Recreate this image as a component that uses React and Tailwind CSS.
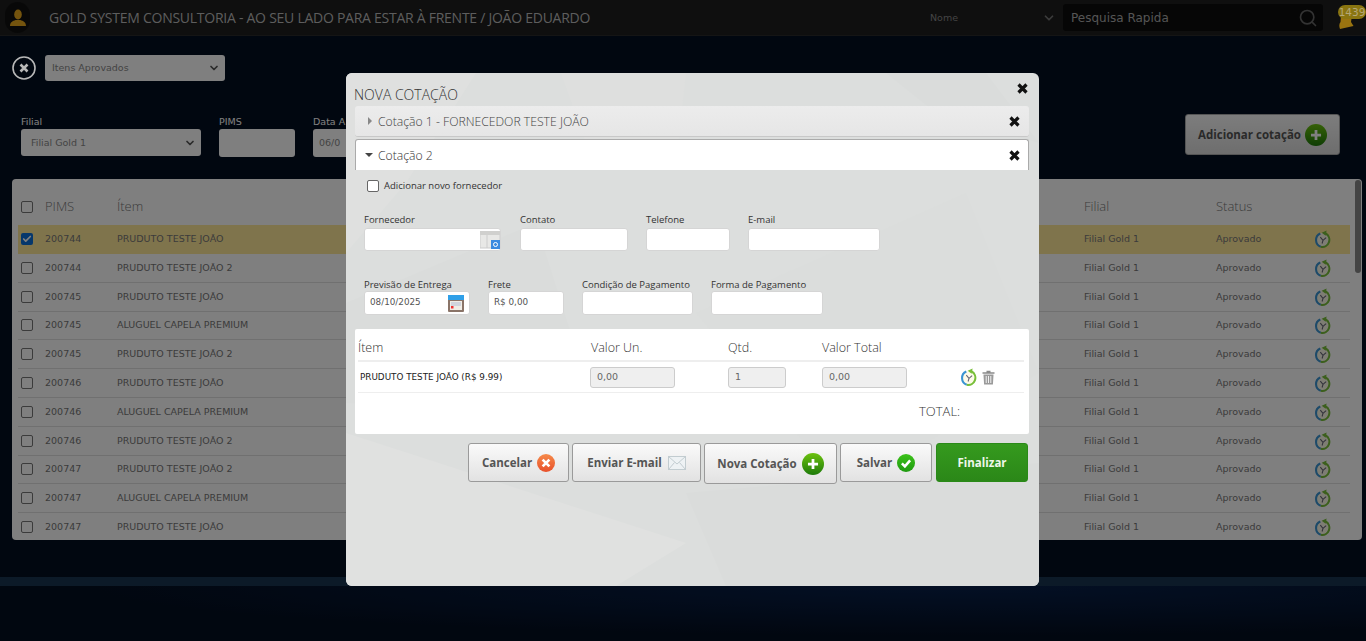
import React from "react";
import { ChevronDown, Search, Check } from "lucide-react";

const OS = "font-['Open_Sans',sans-serif]";
const NS = "font-['DejaVu_Sans',sans-serif]";

const rows = [
  ["200744", "PRUDUTO TESTE JOÃO", true],
  ["200744", "PRUDUTO TESTE JOÃO 2"],
  ["200745", "PRUDUTO TESTE JOÃO"],
  ["200745", "ALUGUEL CAPELA PREMIUM"],
  ["200745", "PRUDUTO TESTE JOÃO 2"],
  ["200746", "PRUDUTO TESTE JOÃO"],
  ["200746", "ALUGUEL CAPELA PREMIUM"],
  ["200746", "PRUDUTO TESTE JOÃO 2"],
  ["200747", "PRUDUTO TESTE JOÃO 2"],
  ["200747", "ALUGUEL CAPELA PREMIUM"],
  ["200747", "PRUDUTO TESTE JOÃO"],
];

function ClockIcon({ size = 18 }) {
  return (
    <svg width={size} height={size} viewBox="0 0 20 20" className="shrink-0">
      <circle cx="10" cy="11" r="8" fill="#fdfbe8" />
      <path d="M7 3.900A8 8 0 0 0 7.500 18.700" fill="none" stroke="#3a94d2" strokeWidth="2.300" />
      <path d="M7.500 18.700A8 8 0 0 0 13 3.900" fill="none" stroke="#78bf3a" strokeWidth="2.300" />
      <path d="M14 .5 8.500 3l4.500 3.500z" fill="#78bf3a" />
      <path d="M10 11.500 7 8M10 11.500l3.500-3M10 11.500l-1 3.500" stroke="#667" strokeWidth="1.200" fill="none" />
    </svg>
  );
}

function TrashIcon() {
  return (
    <svg width="13" height="15" viewBox="0 0 13 15" className="shrink-0 ml-[4px]">
      <path d="M4.500 1.500h4M.5 3h12" stroke="#8a8a8a" strokeWidth="1.500" fill="none" />
      <path d="M1.500 4.500h10l-.6 10H2.100z" fill="#9a9a9a" />
      <path d="M4.200 6v7M6.500 6v7M8.800 6v7" stroke="#f2f2f2" strokeWidth="1" />
    </svg>
  );
}

function RoundIcon({ size, from, to, children }) {
  return (
    <svg width={size} height={size} viewBox="0 0 24 24" className="shrink-0">
      <defs>
        <linearGradient id={`g${from.slice(1)}`} x1="0" y1="0" x2="0" y2="1">
          <stop offset="0" stopColor={from} />
          <stop offset="1" stopColor={to} />
        </linearGradient>
      </defs>
      <circle cx="12" cy="12" r="12" fill={`url(#g${from.slice(1)})`} />
      {children}
    </svg>
  );
}

const PlusIcon = ({ size = 22 }) => (
  <RoundIcon size={size} from="#6cc20e" to="#1d7a0a">
    <path d="M12 6.500v11M6.500 12h11" stroke="#fff" strokeWidth="3" />
  </RoundIcon>
);
const CancelIcon = () => (
  <RoundIcon size={18} from="#f58a4a" to="#e8502a">
    <path d="M7.500 7.500l9 9M16.500 7.500l-9 9" stroke="#fff" strokeWidth="3.600" />
  </RoundIcon>
);
const OkIcon = () => (
  <RoundIcon size={18} from="#3cc21a" to="#1f9a10">
    <path d="M6.500 12.500l4 4 7-8" stroke="#fff" strokeWidth="3.400" fill="none" />
  </RoundIcon>
);

const CloseX = () => (
  <svg width="13" height="13" viewBox="0 0 13 13" className="shrink-0">
    <path d="M2.500 2.500l8 8M10.500 2.500l-8 8" stroke="#111" strokeWidth="3.200" />
  </svg>
);

function Field({ label, w, value, gap, h, children }) {
  return (
    <div className={`flex flex-col ${w}`}>
      <span className={`${OS} text-[9.500px] leading-[12px] text-[#333] whitespace-nowrap ${gap}`}>{label}</span>
      <div className={`relative ${h} bg-white rounded-[3px] border border-[#d5d5d5] flex items-center pl-[5px]`}>
        <span className={`${NS} text-[8.800px] text-[#555]`}>{value}</span>
        {children}
      </div>
    </div>
  );
}

function ModalButton({ w, h = "h-[39px]", children, className = "" }) {
  return (
    <button className={`${w} ${h} ${OS} ${className} rounded-[3px] border border-[#9a9a9a] bg-gradient-to-b from-[#fafafa] to-[#e2e2e2] text-[#555] text-[11.500px] font-bold flex items-center justify-center gap-[5px]`}>
      {children}
    </button>
  );
}

const Texture = () => (
  <svg className="absolute inset-0 w-full h-full" viewBox="0 0 693 513" preserveAspectRatio="none">
    <rect width="693" height="513" fill="#dcdedd" />
    <polygon points="0,0 130,0 60,110 0,180" fill="#dfe0df" />
    <polygon points="215,0 340,0 330,90 240,70" fill="#dedfde" />
    <polygon points="0,230 190,150 250,340 0,330" fill="#dadcdb" />
    <polygon points="350,240 620,120 693,300 500,420" fill="#dbdddc" />
    <polygon points="540,0 640,0 693,70 590,40" fill="#dadcdb" />
    <polygon points="0,360 340,470 270,513 0,513" fill="#e0e1e0" />
    <polygon points="340,420 693,390 693,513 380,513" fill="#dadcdb" />
  </svg>
);

const Disabled = ({ w, children }) => (
  <span className={`${NS} text-[9.500px] text-[#666] ${w} h-[21px] bg-[#efefef] border border-[#ccc] rounded-[3px] flex items-center pl-[6px]`}>{children}</span>
);

function Modal() {
  return (
    <div className="absolute left-[346px] top-[73px] w-[693px] h-[513px] rounded-[6px] overflow-hidden">
      <Texture />
      <div className="relative flex flex-col h-full">
        <div className="flex items-center justify-between pl-[8px] pr-[10px] h-[33px] pt-[10px]">
          <span className={`${OS} font-light text-[14px] leading-[16px] text-[#333]`}>NOVA COTAÇÃO</span>
          <div className="-mt-[12px]"><CloseX /></div>
        </div>
        <div className="ml-[9px] mr-[10px] flex flex-col">
          <div className="h-[31px] rounded-[3px] bg-gradient-to-b from-[#ececec] to-[#e6e6e6] border-b border-[#c8c8c8] flex items-center pl-[12px] pr-[8px]">
            <svg width="6" height="8" viewBox="0 0 6 8"><path d="M1 0l4 4-4 4z" fill="#888" /></svg>
            <span className={`${OS} font-light text-[12.200px] leading-[16px] pt-[1px] text-[#444] ml-[5px] flex-1`}>Cotação 1 - FORNECEDOR TESTE JOÃO</span>
            <CloseX />
          </div>
          <div className="mt-[2px] h-[31px] rounded-t-[3px] bg-white border-t border-x border-[#aaa] flex items-center pl-[9px] pr-[7px]">
            <svg width="8" height="6" viewBox="0 0 8 6"><path d="M0 1h8L4 5z" fill="#444" /></svg>
            <span className={`${OS} font-light text-[12.200px] leading-[16px] pt-[1px] text-[#333] ml-[5px] flex-1`}>Cotação 2</span>
            <CloseX />
          </div>
        </div>
        <div className="flex items-center ml-[21px] mt-[10px]">
          <span className="w-[12px] h-[12px] rounded-[2px] border border-[#666] bg-white" />
          <span className={`${OS} text-[9.500px] leading-[12px] text-[#333] ml-[5px] -mt-[1px]`}>Adicionar novo fornecedor</span>
        </div>
        <div className="flex ml-[18px] mt-[22px]">
          <Field label="Fornecedor" w="w-[137px]" gap="mb-[2px]" h="h-[23px]">
            <svg width="20" height="18" viewBox="0 0 20 18" className="absolute right-0 top-[2px]">
              <rect x="0" y="0" width="20" height="17" fill="#e8e8e6" stroke="#ccc" />
              <rect x="0" y="0" width="20" height="4" fill="#d0d0ce" />
              <path d="M7 4v13" stroke="#ccc" />
              <rect x="11" y="9" width="9" height="9" fill="#3b8be0" />
              <circle cx="15.500" cy="13.500" r="2" fill="none" stroke="#fff" />
            </svg>
          </Field>
          <div className="w-[19px]" />
          <Field label="Contato" w="w-[108px]" gap="mb-[2px]" h="h-[23px]" />
          <div className="w-[18px]" />
          <Field label="Telefone" w="w-[84px]" gap="mb-[2px]" h="h-[23px]" />
          <div className="w-[18px]" />
          <Field label="E-mail" w="w-[132px]" gap="mb-[2px]" h="h-[23px]" />
        </div>
        <div className="flex ml-[18px] mt-[28px]">
          <Field label="Previsão de Entrega" w="w-[106px]" value="08/10/2025" h="h-[24px]">
            <svg width="16" height="18" viewBox="0 0 16 18" className="absolute right-[5px] top-[2px]">
              <rect x="0" y="1" width="16" height="17" rx="1" fill="#8a7468" />
              <rect x="0" y="1" width="16" height="5" fill="#2f9fe8" />
              <rect x="2" y="7" width="12" height="9" fill="#f0ede6" />
              <path d="M3 9h10M3 11h10" stroke="#9ac" strokeWidth=".7" />
              <rect x="3" y="12" width="2.500" height="2.500" fill="#e33" />
            </svg>
          </Field>
          <div className="w-[18px]" />
          <Field label="Frete" w="w-[76px]" value="R$ 0,00" h="h-[24px]" />
          <div className="w-[18px]" />
          <Field label="Condição de Pagamento" w="w-[111px]" h="h-[24px]" />
          <div className="w-[18px]" />
          <Field label="Forma de Pagamento" w="w-[112px]" h="h-[24px]" />
        </div>
        <div className="ml-[9px] mr-[10px] mt-[14px] h-[105px] bg-white rounded-[2px] pl-[3px] pr-[5px] flex flex-col">
          <div className={`${OS} font-light text-[12.500px] text-[#333] h-[33px] pt-[8px] border-b-2 border-[#eee] grid grid-cols-[233px_137px_94px_1fr] items-center`}>
            <span>Ítem</span><span>Valor Un.</span><span>Qtd.</span><span>Valor Total</span>
          </div>
          <div className="h-[31px] border-b border-[#eee] flex items-center pl-[2px]">
            <span className={`${NS} text-[8.800px] text-[#222] w-[230px] pt-[2px] whitespace-nowrap`}>PRUDUTO TESTE JOÃO (R$ 9.99)</span>
            <Disabled w="w-[85px]">0,00</Disabled>
            <span className="w-[53px]" />
            <Disabled w="w-[58px]">1</Disabled>
            <span className="w-[36px]" />
            <Disabled w="w-[85px]">0,00</Disabled>
            <span className="w-[53px]" />
            <ClockIcon size={18} />
            <TrashIcon />
          </div>
          <div className={`${OS} font-light text-[13px] text-[#333] mt-[9px] ml-[561px]`}>TOTAL:</div>
        </div>
        <div className="flex items-start ml-[122px] mt-[9px] gap-[3px]">
          <ModalButton w="w-[101px]">Cancelar <CancelIcon /></ModalButton>
          <ModalButton w="w-[129px]">
            Enviar E-mail
            <svg width="18" height="14" viewBox="0 0 18 14" className="ml-[1px]">
              <rect x=".5" y=".5" width="17" height="13" fill="#eef2f4" stroke="#c2ccd0" />
              <path d="M.5.5 9 8l8.500-7.500M.5 13.500l6-7M17.500 13.500l-6-7" fill="none" stroke="#c2ccd0" />
            </svg>
          </ModalButton>
          <ModalButton w="w-[133px]" h="h-[41px]">Nova Cotação <PlusIcon /></ModalButton>
          <ModalButton w="w-[92px]">Salvar <OkIcon /></ModalButton>
          <button className={`${OS} w-[92px] h-[39px] ml-[1px] rounded-[3px] border border-[#2a8a18] bg-gradient-to-b from-[#359a1e] to-[#2b8718] text-[#eef7ea] text-[11.500px] font-bold`}>Finalizar</button>
        </div>
      </div>
    </div>
  );
}

const bgSelect = "rounded-[3px] bg-white flex items-center justify-between";

export default function App() {
  return (
    <div className={`relative w-[1366px] h-[641px] overflow-hidden bg-[#030e20] ${NS}`}>
      <header className="h-[36px] bg-[#1e1e1e] border-b border-[#2a2a2a] flex items-center pl-[5px]">
        <div className="w-[25px] h-[31px] rounded-full bg-[#111] flex items-center justify-center">
          <svg width="16" height="18" viewBox="0 0 16 18">
            <ellipse cx="8" cy="5.500" rx="3.800" ry="5" fill="#e8a81c" />
            <path d="M0 17c0-4 3-5 5.500-6h5c2.500 1 5.500 2 5.500 6z" fill="#e8a81c" />
          </svg>
        </div>
        <span className={`${OS} text-[14px] text-[#bbb] ml-[19px] tracking-[-0.26px] whitespace-nowrap`}>GOLD SYSTEM CONSULTORIA - AO SEU LADO PARA ESTAR À FRENTE / JOÃO EDUARDO</span>
        <span className="ml-auto text-[9.500px] text-[#888] w-[112px] pt-[1px]">Nome</span>
        <ChevronDown size={14} strokeWidth={3} className="text-[#777]" />
        <div className="ml-[7px] w-[260px] h-[27px] bg-[#0c0c0c] rounded-[3px] flex items-center justify-between pl-[8px] pr-[5px]">
          <span className="text-[12px] text-[#aaa]">Pesquisa Rapida</span>
          <Search size={20} className="text-[#666]" />
        </div>
        <div className="relative z-10 ml-[13px] w-[30px] h-[30px]">
          <svg width="17" height="14" viewBox="0 0 17 14" className="absolute left-[1px] top-[12px]">
            <path d="M4 0h11l-1 7 2.500 4L3 14C2 11 2 9 3.500 7z" fill="#9a7410" />
          </svg>
          <span className="absolute left-[2px] top-[2px] w-[28px] h-[14px] rounded-full bg-[#8a7510] text-[10.500px] leading-[14px] text-[#b5a878] text-center">1439</span>
        </div>
      </header>

      <div className="flex items-center pl-[12px] mt-[19px]">
        <svg width="24" height="24" viewBox="0 0 24 24" className="relative z-10">
          <circle cx="12" cy="12" r="11" fill="none" stroke="#b8b8b8" strokeWidth="1.600" />
          <path d="M8.500 8.500l7 7M15.500 8.500l-7 7" stroke="#b8b8b8" strokeWidth="2.600" />
        </svg>
        <div className={`${bgSelect} ml-[9px] w-[180px] h-[26px] pl-[7px] pr-[5px]`}>
          <span className="text-[9.500px] text-[#888] pt-[1px]">Itens Aprovados</span>
          <ChevronDown size={12} strokeWidth={3.500} className="text-[#555]" />
        </div>
      </div>

      <div className="relative flex items-start pl-[21px] mt-[35px] h-[63px]">
        <div className="w-[198px]">
          <div className="text-[9.500px] leading-[12px] text-white">Filial</div>
          <div className={`${bgSelect} mt-[1px] w-[180px] h-[27px] pl-[10px] pr-[5px]`}>
            <span className="text-[9.500px] text-[#888] pt-[1px]">Filial Gold 1</span>
            <ChevronDown size={12} strokeWidth={3.500} className="text-[#555]" />
          </div>
        </div>
        <div className="w-[94px]">
          <div className="text-[9.500px] leading-[12px] text-white">PIMS</div>
          <div className="mt-[1px] w-[76px] h-[28px] rounded-[3px] bg-white" />
        </div>
        <div className="w-[100px]">
          <div className="text-[9.500px] leading-[12px] text-white">Data A</div>
          <div className="mt-[1px] w-[90px] h-[28px] rounded-[3px] bg-white pl-[6px] flex items-center text-[9.500px] text-[#888]">06/0</div>
        </div>
        <button className={`${OS} ml-auto mr-[26px] -mt-[2px] w-[155px] h-[41px] rounded-[3px] border border-[#aaa] bg-gradient-to-b from-[#fafafa] to-[#dcdcdc] text-[#555] text-[11.500px] font-bold flex items-center justify-center gap-[4px]`}>
          Adicionar cotação <PlusIcon />
        </button>
      </div>

      <div className="relative ml-[12px] w-[1350px] h-[361px] rounded-[4px] bg-white overflow-hidden">
        <div className={`${OS} font-light h-[46.200px] pt-[9px] flex items-center text-[13px] text-[#777] pl-[9px]`}>
          <span className="w-[12px] h-[12px] rounded-[2px] border border-[#777]" />
          <span className="ml-[12px] w-[72px]">PIMS</span>
          <span className="w-[967px]">Ítem</span>
          <span className="w-[132px]">Filial</span>
          <span>Status</span>
        </div>
        {rows.map(([pims, item, sel], i) => (
          <div key={i} className={`h-[28.800px] ml-[6px] w-[1332px] flex items-center pl-[3px] text-[9.500px] text-[#777] border-b ${sel ? "bg-[#ffe898] border-transparent" : "border-[#e0e0e0]"}`}>
            {sel ? (
              <span className="w-[12px] h-[12px] rounded-[2px] bg-[#0b6fd8] flex items-center justify-center">
                <Check size={10} strokeWidth={4} className="text-white" />
              </span>
            ) : (
              <span className="w-[12px] h-[12px] rounded-[2px] border border-[#777]" />
            )}
            <span className="ml-[12px] w-[72px]">{pims}</span>
            <span className="w-[967px]">{item}</span>
            <span className="w-[132px]">Filial Gold 1</span>
            <span className="w-[98px]">Aprovado</span>
            <ClockIcon />
          </div>
        ))}
        <div className="absolute right-[1px] top-[1px] w-[6px] h-[93px] rounded-full bg-[#888]" />
      </div>

      <div className="mt-[37px] h-[9px] bg-[#183450]" />
      <div className="h-[55px] bg-[radial-gradient(ellipse_at_70%_0%,#08204a,#030e20_65%)]" />

      <div className="absolute inset-0 bg-black/50" />
      <Modal />
    </div>
  );
}
